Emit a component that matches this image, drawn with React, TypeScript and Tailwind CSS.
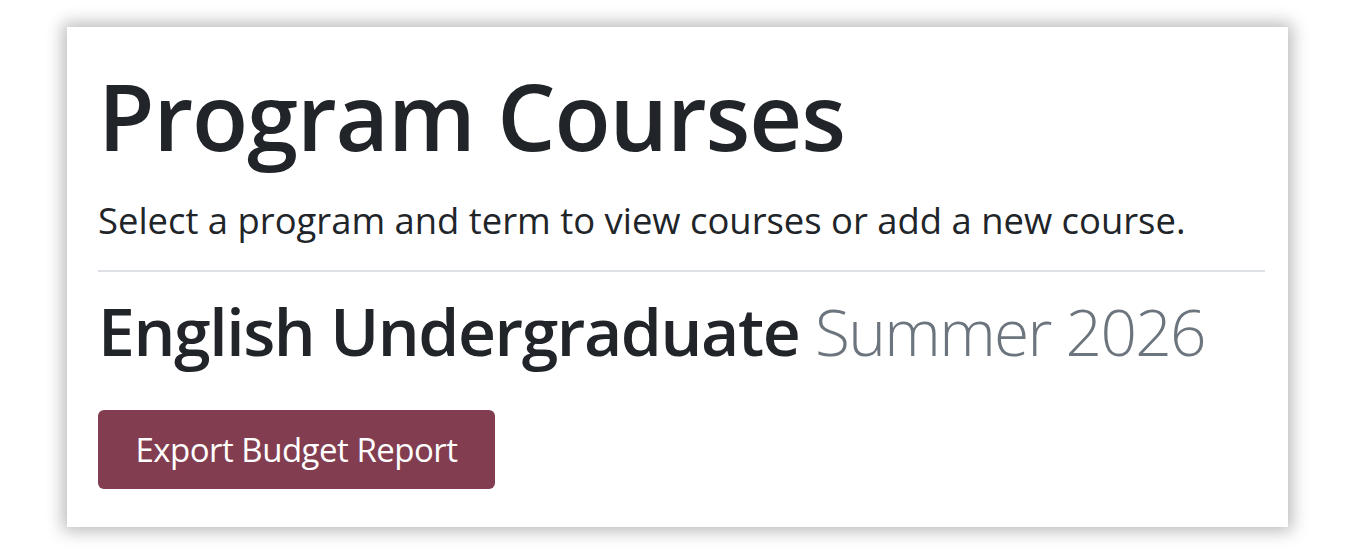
export default function App() {
  return (
    <div className="w-[1354px] h-[554px] bg-white pt-[27px] pl-[67px]" style={{ fontFamily: '"Open Sans", "Noto Sans", sans-serif' }}>
      <div className="w-[1221px] h-[500px] bg-white shadow-[0_0_16px_4px_rgba(0,0,0,0.28)] pl-[31px] pr-[23px] pt-[34px]">
        <h1 className="text-[92px] leading-[1.2] font-semibold tracking-[-1.1px] text-[#212529] whitespace-nowrap">Program Courses</h1>
        <p className="mt-[22px] text-[36.4px] leading-[1.5] text-[#212529] whitespace-nowrap">Select a program and term to view courses or add a new course.</p>
        <div className="mt-[22px] h-[2px] bg-[#dee2e6]" />
        <h2 className="mt-[19px] text-[66px] leading-[1.2] font-semibold tracking-[-1.4px] text-[#212529] whitespace-nowrap">
          English Undergraduate <span className="text-[64px] font-light tracking-[-1.7px] text-[#6c757d]">Summer 2026</span>
        </h2>
        <button className="mt-[39px] w-[397px] h-[79px] rounded-[6px] bg-[#823e50] text-white text-[33px] tracking-[-0.5px] flex items-center justify-center">
          Export Budget Report
        </button>
      </div>
    </div>
  );
}
